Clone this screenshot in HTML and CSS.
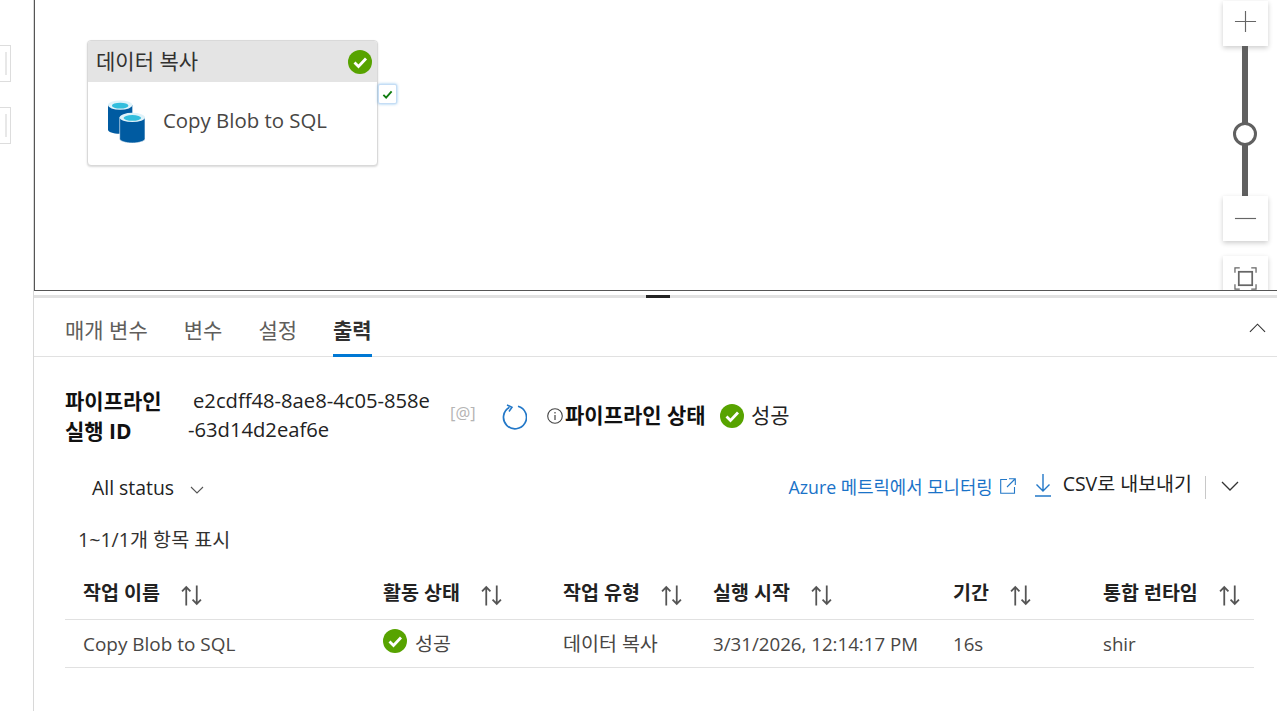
FILE: index.html
```html
<!DOCTYPE html>
<html lang="ko">
<head>
<meta charset="utf-8">
<title>파이프라인 실행</title>
<link rel="stylesheet" href="styles.css">
</head>
<body>
<div class="app">
  <aside class="rail">
    <div class="stub stub-a"></div>
    <div class="stub stub-b"></div>
  </aside>
  <main class="main">
    <section class="canvas">
      <div class="node">
        <div class="node-head">
          <span>데이터 복사</span>
          <svg class="ok ok-node" viewBox="0 0 24 24"><circle cx="12" cy="12" r="12" fill="#57a300"/><path d="M6.500 12.500l4 4 7.500-8" fill="none" stroke="#fff" stroke-width="2.800"/></svg>
        </div>
        <div class="node-body">
          <svg class="db" viewBox="0 0 38 42" preserveAspectRatio="none">
            <path d="M0 5v24c0 2 5 4 12 4s13-2 13-4V5z" fill="#005ba1"/>
            <ellipse cx="12.500" cy="5" rx="12.500" ry="4.500" fill="#dff3fa"/>
            <ellipse cx="12.500" cy="5.500" rx="8.500" ry="2.800" fill="#32bedd"/>
            <path d="M12 17v21c0 2 6 4 13 4s13-2 13-4V17z" fill="#005ba1" stroke="#fff" stroke-width=".6"/>
            <ellipse cx="25" cy="17" rx="13" ry="4.500" fill="#dff3fa"/>
            <ellipse cx="25" cy="17.500" rx="9" ry="2.800" fill="#32bedd"/>
          </svg>
          <span class="node-name">Copy Blob to SQL</span>
        </div>
      </div>
      <div class="port">
        <svg viewBox="0 0 12 12"><path d="M1.500 6.500l3 3 6-7" fill="none" stroke="#107c10" stroke-width="2"/></svg>
      </div>
      <div class="zoom">
        <button class="zoom-btn zoom-plus"><svg viewBox="0 0 24 24"><path d="M12 1v22M1 12h22" stroke="#666" stroke-width="1.200" fill="none"/></svg></button>
        <div class="track track-top"></div>
        <div class="thumb"></div>
        <div class="track track-bottom"></div>
        <button class="zoom-btn"><svg viewBox="0 0 24 24"><path d="M1 12h22" stroke="#666" stroke-width="1.200" fill="none"/></svg></button>
        <button class="zoom-btn zoom-fit"><svg viewBox="0 0 24 24"><path d="M1 6V1h5M18 1h5v5M23 18v5h-5M6 23H1v-5" stroke="#666" stroke-width="1.300" fill="none"/><rect x="5" y="5" width="14" height="14" stroke="#666" stroke-width="1.800" fill="none"/></svg></button>
      </div>
    </section>
    <div class="splitter"><span class="grip"></span></div>
    <nav class="tabs">
      <a class="tab">매개 변수</a>
      <a class="tab">변수</a>
      <a class="tab">설정</a>
      <a class="tab tab-on">출력</a>
      <svg class="collapse" viewBox="0 0 18 10"><path d="M1 9l8-8 8 8" fill="none" stroke="#333" stroke-width="1.200"/></svg>
    </nav>
    <section class="run">
      <div class="run-label">파이프라인<br>실행 ID</div>
      <div class="run-id"><span class="run-id-a">e2cdff48-8ae8-4c05-858e</span><br>-63d14d2eaf6e</div>
      <span class="at">[@]</span>
      <svg class="refresh" viewBox="0 0 26 26"><path d="M8.500 3.200A11.500 11.500 0 1 0 17 2.200" fill="none" stroke="#2378c8" stroke-width="1.700"/><path d="M6 1l5 2.200-3 4.300" fill="none" stroke="#2378c8" stroke-width="1.500"/></svg>
      <svg class="info" viewBox="0 0 16 16"><circle cx="8" cy="8" r="7.300" fill="none" stroke="#444" stroke-width="1.100"/><path d="M8 7v5M8 4v1.500" stroke="#444" stroke-width="1.200"/></svg>
      <strong class="status-label">파이프라인 상태</strong>
      <svg class="ok ok-status" viewBox="0 0 24 24"><circle cx="12" cy="12" r="12" fill="#57a300"/><path d="M6.500 12.500l4 4 7.500-8" fill="none" stroke="#fff" stroke-width="2.800"/></svg>
      <span class="status-text">성공</span>
    </section>
    <section class="toolbar">
      <div class="filter">All status
        <svg class="chev-s" viewBox="0 0 14 8"><path d="M1 1l6 6 6-6" fill="none" stroke="#555" stroke-width="1.100"/></svg>
      </div>
      <div class="actions">
        <a class="link">Azure 메트릭에서 모니터링</a>
        <svg class="ext" viewBox="0 0 16 16"><path d="M7 1.500H.7v13.800h13.800V9M9 .7h6.300V7M15 1L7 9" fill="none" stroke="#2378c8" stroke-width="1.100"/></svg>
        <svg class="down" viewBox="0 0 16 24"><path d="M8 1v17M1.500 11.500L8 18l6.500-6.500M0 23h16" fill="none" stroke="#2378c8" stroke-width="1.400"/></svg>
        <span class="csv">CSV로 내보내기</span>
        <span class="sep"></span>
        <svg class="chev" viewBox="0 0 18 10"><path d="M1 1l8 8 8-8" fill="none" stroke="#333" stroke-width="1.300"/></svg>
      </div>
    </section>
    <div class="count">1~1/1개 항목 표시</div>
    <section class="table">
      <div class="row head">
        <div class="cell">작업 이름<svg class="sort" viewBox="0 0 20 20"><use href="#sort"/></svg></div>
        <div class="cell">활동 상태<svg class="sort" viewBox="0 0 20 20"><use href="#sort"/></svg></div>
        <div class="cell">작업 유형<svg class="sort" viewBox="0 0 20 20"><use href="#sort"/></svg></div>
        <div class="cell">실행 시작<svg class="sort" viewBox="0 0 20 20"><use href="#sort"/></svg></div>
        <div class="cell">기간<svg class="sort" viewBox="0 0 20 20"><use href="#sort"/></svg></div>
        <div class="cell">통합 런타임<svg class="sort" viewBox="0 0 20 20"><use href="#sort"/></svg></div>
      </div>
      <div class="row body">
        <div class="cell name">Copy Blob to SQL</div>
        <div class="cell"><svg class="ok ok-row" viewBox="0 0 24 24"><circle cx="12" cy="12" r="12" fill="#57a300"/><path d="M6.500 12.500l4 4 7.500-8" fill="none" stroke="#fff" stroke-width="2.800"/></svg>성공</div>
        <div class="cell">데이터 복사</div>
        <div class="cell latin">3/31/2026, 12:14:17 PM</div>
        <div class="cell latin">16s</div>
        <div class="cell latin">shir</div>
      </div>
    </section>
  </main>
</div>
<svg class="defs" width="0" height="0"><defs><g id="sort" fill="none" stroke="#555" stroke-width="1.700"><path d="M5 19.500V2M1 6l4-4 4 4"/><path d="M15 .5V18M11 14l4 4 4-4"/></g></defs></svg>
</body>
</html>
```
FILE: styles.css
```css
* { box-sizing: border-box; }
html, body { margin: 0; height: 100%; overflow: hidden; background: #fff; }
body { font-family: "Open Sans", "Noto Sans CJK KR", sans-serif; color: #323130; font-size: 20px; line-height: 28px; }
svg { display: block; flex: none; }
.defs { position: absolute; }
.app { display: flex; height: 711px; }
.rail { width: 34px; flex: none; border-right: 1px solid #d8d8d8; padding-top: 45px; }
.stub { width: 11px; height: 37px; border: 1px solid #ddd; border-left: 0; position: relative; margin-bottom: 25px; }
.stub::after { content: ""; position: absolute; right: 3px; top: 6px; bottom: 6px; width: 2px; background: #e8e8e8; }
.main { flex: 1; min-width: 0; display: flex; flex-direction: column; }

.canvas { position: relative; height: 291px; flex: none; border-left: 1px solid #555; border-bottom: 1px solid #555; overflow: hidden; }
.node { position: absolute; left: 52px; top: 40px; width: 291px; height: 126px; background: #fff; border: 1px solid #d9d9d9; border-radius: 4px; box-shadow: 0 1px 2px rgba(0,0,0,.15); overflow: hidden; }
.node-head { height: 41px; background: #e4e4e4; display: flex; align-items: center; justify-content: space-between; padding: 0 5px 2px 8px; font-size: 21px; color: #323130; }
.node-head .ok { margin-top: 2px; }
.node-body { display: flex; align-items: center; padding: 18px 0 0 20px; gap: 18px; }
.db { width: 37px; height: 43px; }
.node-name { font-size: 20.400px; color: #484644; margin-top: -3px; }
.ok-node { width: 24px; height: 24px; }
.port { position: absolute; left: 343px; top: 84px; width: 19px; height: 20px; background: #fff; border: 1px solid #c5ddf5; border-radius: 2px; box-shadow: 0 0 3px rgba(0,120,212,.45); display: flex; align-items: center; justify-content: center; }
.port svg { width: 11px; height: 11px; }
.zoom { position: absolute; left: 1188px; top: 1px; width: 45px; display: flex; flex-direction: column; align-items: center; }
.zoom-btn { width: 45px; height: 45px; padding: 0; border: 0; background: #fff; box-shadow: 0 2px 5px rgba(0,0,0,.2); display: flex; align-items: center; justify-content: center; flex: none; }
.zoom-btn svg { width: 23px; height: 23px; }
.zoom-plus { padding-bottom: 4px; }
.zoom-fit { margin-top: 15px; }
.track { width: 6px; background: #606060; margin-right: 1px; }
.track-top { height: 78px; }
.track-bottom { height: 52px; }
.thumb { width: 24px; height: 24px; border: 3px solid #606060; border-radius: 50%; background: #fff; margin: -2px 1px -2px 0; position: relative; }

.splitter { height: 3px; margin-top: 4px; background: #e1e1e1; position: relative; flex: none; }
.grip { position: absolute; left: 612px; top: 0; width: 24px; height: 3px; background: #222; }
.tabs { display: flex; align-items: flex-end; height: 59px; border-bottom: 1px solid #e1e1e1; padding-left: 31px; gap: 36px; position: relative; flex: none; }
.tab { font-size: 21px; color: #605e5c; height: 59px; display: flex; align-items: center; border-bottom: 3px solid transparent; margin-bottom: -1px; padding-top: 7px; }
.tab-on { color: #323130; font-weight: 700; border-bottom-color: #0078d4; }
.collapse { position: absolute; right: 11px; top: 25px; width: 17px; height: 10px; }

.run { position: relative; height: 100px; flex: none; }
.run-label { position: absolute; left: 31px; top: 29px; font-size: 21px; font-weight: 700; line-height: 30px; color: #111; }
.run-id { position: absolute; left: 154px; top: 29px; line-height: 29px; color: #222; font-size: 20.200px; }
.run-id-a { margin-left: 5px; }
.at { position: absolute; left: 416px; top: 42px; font-size: 16.500px; color: #b4b4b4; }
.refresh { position: absolute; left: 467px; top: 47px; width: 26px; height: 26px; }
.info { position: absolute; left: 513px; top: 51px; width: 16px; height: 16px; }
.status-label { position: absolute; left: 531px; top: 44px; color: #111; font-weight: 700; font-size: 21px; }
.ok-status { position: absolute; left: 686px; top: 47px; width: 24px; height: 24px; }
.status-text { position: absolute; left: 717px; top: 44px; color: #222; font-size: 21px; }

.toolbar { height: 60px; flex: none; display: flex; justify-content: space-between; align-items: center; padding: 0 38px 0 58px; }
.filter { display: flex; align-items: center; gap: 16px; font-size: 19.400px; color: #222; margin-top: 2px; }
.chev-s { width: 14px; height: 8px; margin-top: 3px; }
.actions { display: flex; align-items: center; }
.link { color: #1a73c8; font-size: 17.800px; margin-right: 7px; }
.ext { width: 16px; height: 16px; margin: -2px 19px 0 0; }
.down { width: 16px; height: 24px; margin: -5px 12px 0 0; }
.csv { font-size: 19.500px; color: #222; margin-top: -6px; }
.sep { width: 1px; height: 23px; background: #c8c8c8; margin: 0 15px 0 13px; }
.chev { width: 18px; height: 10px; margin-top: -2px; }

.count { font-size: 19.600px; color: #323130; padding-left: 44px; height: 30px; line-height: 30px; flex: none; margin-top: 8px; }
.table { margin: 15px 23px 0 31px; flex: none; }
.row { display: grid; grid-template-columns: 300px 180px 150px 240px 150px 1fr; border-bottom: 1px solid #e1e1e1; align-items: center; }
.cell { display: flex; align-items: center; padding-left: 18px; white-space: nowrap; }
.head { height: 50px; font-weight: 700; font-size: 19.500px; color: #222; padding-bottom: 4px; }
.body { height: 48px; font-size: 19.500px; color: #484644; }
.latin { font-size: 18.700px; }
.name { font-size: 18.950px; }
.sort { width: 21px; height: 21px; margin-left: 21px; margin-top: 6px; }
.ok-row { width: 24px; height: 24px; margin-right: 8px; margin-top: -6px; }
```
